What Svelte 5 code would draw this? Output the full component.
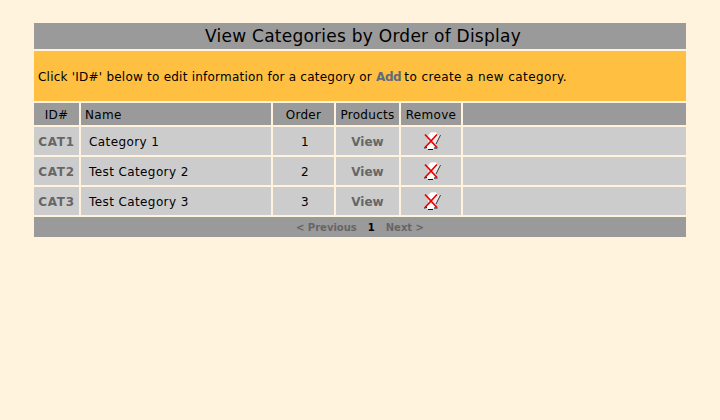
<script>
  const rows = [
    { id: 'CAT1', name: 'Category 1', order: 1 },
    { id: 'CAT2', name: 'Test Category 2', order: 2 },
    { id: 'CAT3', name: 'Test Category 3', order: 3 }
  ];
</script>

<main class="page">
  <table>
    <colgroup>
      <col style="width:45px" /><col style="width:190px" /><col style="width:61px" /><col style="width:63px" /><col style="width:60px" /><col />
    </colgroup>
    <thead>
      <tr><th colspan="6" class="title">View Categories by Order of Display</th></tr>
      <tr><td colspan="6" class="notice">Click 'ID#' below to edit information for a category or <a href="#add">Add</a><span class="after"> to create a new category.</span></td></tr>
      <tr class="head">
        <th>ID#</th><th class="left">Name</th><th>Order</th><th>Products</th><th>Remove</th><th></th>
      </tr>
    </thead>
    <tbody>
      {#each rows as row}
        <tr class="row">
          <td class="center"><a class="cat" href="#cat">{row.id}</a></td>
          <td class="name">{row.name}</td>
          <td class="center num">{row.order}</td>
          <td class="center"><a class="view" href="#view">View</a></td>
          <td class="center icon">
            <svg width="20" height="18" viewBox="0 0 20 18" aria-label="Remove">
              <path d="M7 3 L10 0.5 L15 0.5 L17 3 L19.5 3 L15 12 L14.5 15 L12 17.5 L8 17.5 L5 16 L7 11 Z" fill="#ececec" />
              <path d="M8 2.5 L10 0.5 L15 0.5 L16.5 3 L14 7 L10 7 Z" fill="#fff" />
              <path d="M6.5 12 L12 12 L13 16 L8 17 L5.5 16 Z" fill="#fff" />
              <path d="M19.5 3 L15 12" stroke="#333" stroke-width="1" fill="none" />
              <path d="M3 16 L6 15.5 M7 17.5 L12 17.5 M13 16 L16.5 16" stroke="#111" stroke-width="1" />
              <path d="M4 2.5 L16 15.5 M16 2.5 L4 15.5" stroke="#e60000" stroke-width="1.7" />
            </svg>
          </td>
          <td></td>
        </tr>
      {/each}
      <tr>
        <td colspan="6" class="pager">
          <span class="off">&lt; Previous</span><b>1</b><span class="off">Next &gt;</span>
        </td>
      </tr>
    </tbody>
  </table>
</main>

<style>
  :global(body) {
    margin: 0;
    background: #fff3de;
  }
  .page {
    height: 420px;
    box-sizing: border-box;
    padding: 21px 32px 0;
    font-family: "DejaVu Sans", Verdana, sans-serif;
    font-size: 12px;
    color: #000;
  }
  table {
    width: 656px;
    table-layout: fixed;
    border-collapse: separate;
    border-spacing: 2px;
  }
  th, td {
    padding: 0;
    font-weight: normal;
    text-align: center;
  }
  .title {
    height: 26px;
    padding-left: 6px;
    background: #9a9a9a;
    font-size: 17px;
    letter-spacing: 0.25px;
  }
  .notice {
    height: 49px;
    background: #ffbf40;
    text-align: left;
    padding: 1px 0 0 4px;
    letter-spacing: 0.23px;
  }
  .notice a {
    color: #5f6a80;
    font-weight: bold;
    text-decoration: none;
    letter-spacing: -0.4px;
    margin-right: 3px;
  }
  .notice .after {
    letter-spacing: 0.4px;
  }
  .head th {
    height: 21px;
    padding-top: 1px;
    background: #9a9a9a;
    letter-spacing: 0.3px;
  }
  .head th.left {
    text-align: left;
    padding-left: 4px;
  }
  .row td {
    height: 27px;
    padding-top: 1px;
    background: #ccc;
    letter-spacing: 0.4px;
  }
  .row td.num {
    padding-left: 3px;
  }
  .row a {
    color: #666;
    font-weight: bold;
    text-decoration: none;
  }
  .row .view {
    letter-spacing: 0;
  }
  .row .cat {
    letter-spacing: 0.7px;
  }
  .row td.name {
    text-align: left;
    padding-left: 8px;
  }
  .row td.icon {
    padding-top: 0;
    height: 28px;
  }
  .icon svg {
    display: block;
    margin: 0 auto;
  }
  .pager {
    height: 20px;
    background: #9a9a9a;
    font-size: 10px;
    font-weight: bold;
  }
  .pager .off {
    color: #666;
  }
  .pager b {
    margin: 0 11px;
  }
</style>
